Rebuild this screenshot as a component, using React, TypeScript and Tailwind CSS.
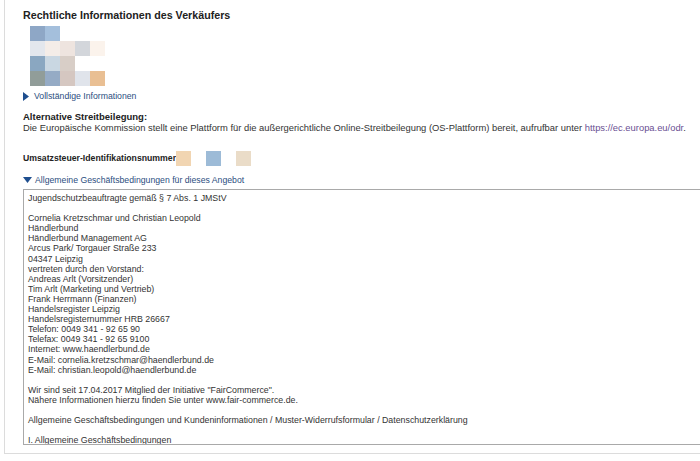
const pixels: string[][] = [
  ["#8ea7c6", "#a4bfdc", "#ffffff", "#ffffff", "#ffffff"],
  ["#e3e7ed", "#f4ede8", "#eee4df", "#d3d6db", "#fbf3ec"],
  ["#8aa7c1", "#c9d7e2", "#d8cec7", "#ffffff", "#ffffff"],
  ["#919d99", "#95abc5", "#d5c7c1", "#e0e4eb", "#e9bf93"],
];

const agbLines = [
  "Jugendschutzbeauftragte gemäß § 7 Abs. 1 JMStV",
  "",
  "Cornelia Kretzschmar und Christian Leopold",
  "Händlerbund",
  "Händlerbund Management AG",
  "Arcus Park/ Torgauer Straße 233",
  "04347 Leipzig",
  "vertreten durch den Vorstand:",
  "Andreas Arlt (Vorsitzender)",
  "Tim Arlt (Marketing und Vertrieb)",
  "Frank Herrmann (Finanzen)",
  "Handelsregister Leipzig",
  "Handelsregisternummer HRB 26667",
  "Telefon: 0049 341 - 92 65 90",
  "Telefax: 0049 341 - 92 65 9100",
  "Internet: www.haendlerbund.de",
  "E-Mail: cornelia.kretzschmar@haendlerbund.de",
  "E-Mail: christian.leopold@haendlerbund.de",
  "",
  'Wir sind seit 17.04.2017 Mitglied der Initiative "FairCommerce".',
  "Nähere Informationen hierzu finden Sie unter www.fair-commerce.de.",
  "",
  "Allgemeine Geschäftsbedingungen und Kundeninformationen / Muster-Widerrufsformular / Datenschutzerklärung",
  "",
  "I. Allgemeine Geschäftsbedingungen",
];

export default function App() {
  return (
    <div className="w-[700px] h-[461px] overflow-hidden bg-white font-['Liberation_Sans',Arial,sans-serif] text-[#333]">
      <div className="ml-[4px] w-[720px] h-[454px] border-l border-b border-[#dcdcdc] pl-[18px] pt-[8px]">
        <h2 className="text-[10.7px] font-bold leading-[15px] text-[#222]">
          Rechtliche Informationen des Verkäufers
        </h2>

        <div className="mt-[3px] ml-[7px] flex flex-col">
          {pixels.map((row, i) => (
            <div key={i} className="flex">
              {row.map((c, j) => (
                <div key={j} className="w-[15px] h-[15px]" style={{ backgroundColor: c }} />
              ))}
            </div>
          ))}
        </div>

        <a href="#" className="mt-[4px] flex items-center gap-[5px] text-[8.7px] leading-[12px] text-[#2b4e80]">
          <svg width="6" height="9" viewBox="0 0 6 9">
            <path d="M0 0 L6 4.5 L0 9 Z" fill="#1f4f8f" />
          </svg>
          Vollständige Informationen
        </a>

        <div className="mt-[9px] leading-[11px]">
          <div className="text-[9.5px] font-bold text-[#222]">Alternative Streitbeilegung:</div>
          <div className="text-[9.4px] whitespace-nowrap">
            Die Europäische Kommission stellt eine Plattform für die außergerichtliche Online-Streitbeilegung (OS-Plattform) bereit, aufrufbar unter{" "}
            <a href="#" className="text-[#6a4f93]">https://ec.europa.eu/odr</a>.
          </div>
        </div>

        <div className="mt-[18px] flex items-center h-[15px] text-[8.7px] font-bold text-[#222]">
          <span>Umsatzsteuer-Identifikationsnummer</span>
          <div className="w-[15px] h-[15px] bg-[#f1d5b2]" />
          <div className="ml-[15px] w-[15px] h-[15px] bg-[#9dbbd7]" />
          <div className="ml-[15px] w-[15px] h-[15px] bg-[#eadcc8]" />
        </div>

        <a href="#" className="mt-[8px] flex items-center gap-[3px] text-[8.7px] leading-[12px] text-[#2b4e80]">
          <svg width="9" height="6" viewBox="0 0 9 6">
            <path d="M0 0 L9 0 L4.5 6 Z" fill="#1f4f8f" />
          </svg>
          Allgemeine Geschäftsbedingungen für dieses Angebot
        </a>

        <div className="mt-[3px] h-[256px] overflow-hidden border border-[#a9a9a9] pl-[4px] pt-[3px] text-[8.8px] leading-[10.1px] text-[#333]">
          {agbLines.map((l, i) => (
            <div key={i} className="h-[10.1px] whitespace-nowrap">
              {l}
            </div>
          ))}
        </div>
      </div>
    </div>
  );
}
